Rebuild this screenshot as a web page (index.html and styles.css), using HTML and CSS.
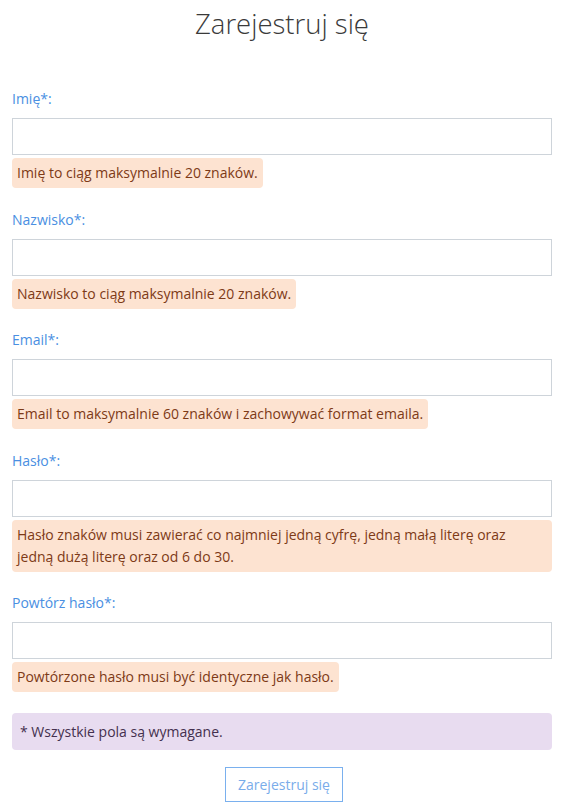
FILE: index.html
```html
<!DOCTYPE html>
<html lang="pl">
<head>
<meta charset="utf-8">
<title>Zarejestruj się</title>
<link rel="stylesheet" href="styles.css">
</head>
<body>
<main class="page">
  <h1 class="title">Zarejestruj się</h1>
  <form class="form">
    <div class="group">
      <label class="label" for="imie">Imię*:</label>
      <input class="input" id="imie" type="text">
      <div class="alert">Imię to ciąg maksymalnie 20 znaków.</div>
    </div>
    <div class="group">
      <label class="label" for="nazwisko">Nazwisko*:</label>
      <input class="input" id="nazwisko" type="text">
      <div class="alert">Nazwisko to ciąg maksymalnie 20 znaków.</div>
    </div>
    <div class="group">
      <label class="label" for="email">Email*:</label>
      <input class="input" id="email" type="text">
      <div class="alert">Email to maksymalnie 60 znaków i zachowywać format emaila.</div>
    </div>
    <div class="group">
      <label class="label" for="haslo">Hasło*:</label>
      <input class="input" id="haslo" type="password">
      <div class="alert alert-block">Hasło znaków musi zawierać co najmniej jedną cyfrę, jedną małą literę oraz<br>jedną dużą literę oraz od 6 do 30.</div>
    </div>
    <div class="group">
      <label class="label" for="haslo2">Powtórz hasło*:</label>
      <input class="input" id="haslo2" type="password">
      <div class="alert">Powtórzone hasło musi być identyczne jak hasło.</div>
    </div>
    <div class="info">* Wszystkie pola są wymagane.</div>
    <div class="actions">
      <button class="btn" type="button">Zarejestruj się</button>
    </div>
  </form>
</main>
</body>
</html>
```
FILE: styles.css
```css
* { box-sizing: border-box; }
html, body { margin: 0; padding: 0; background: #fff; }
body {
  font-family: "Segoe UI", "Open Sans", "Noto Sans", sans-serif;
  font-size: 14px;
  color: #333;
}
.page {
  padding: 0 16px 0 12px;
}
.title {
  margin: 0;
  padding-top: 4px;
  height: 88px;
  text-align: center;
  font-weight: 300;
  font-size: 27.5px;
  line-height: 40px;
  color: #3a3a3a;
}
.form { display: flex; flex-direction: column; }
.group {
  display: flex;
  flex-direction: column;
  align-items: flex-start;
  margin-bottom: 20.6px;
}
.label {
  display: block;
  line-height: 21px;
  margin-bottom: 9px;
  color: #4a8fe2;
}
.input {
  width: 100%;
  height: 37px;
  border: 1px solid #ced4da;
  background: #fff;
  margin: 0;
  padding: 0 8px;
  font: inherit;
}
.alert {
  margin-top: 3px;
  padding: 4px 5px;
  line-height: 22px;
  border-radius: 4px;
  background: #fde3d1;
  color: #7d3a17;
}
.alert-block { width: 100%; }
.info {
  padding: 7px 8px;
  line-height: 23px;
  border-radius: 4px;
  background: #e8dcf0;
  color: #44304e;
}
.actions {
  display: flex;
  justify-content: center;
  margin-top: 17px;
}
.btn {
  height: 35px;
  padding: 0 12px;
  border: 1px solid #7ab0ee;
  background: #fff;
  color: #79acea;
  font: inherit;
  font-size: 14px;
  margin-left: 4px;
}
```
